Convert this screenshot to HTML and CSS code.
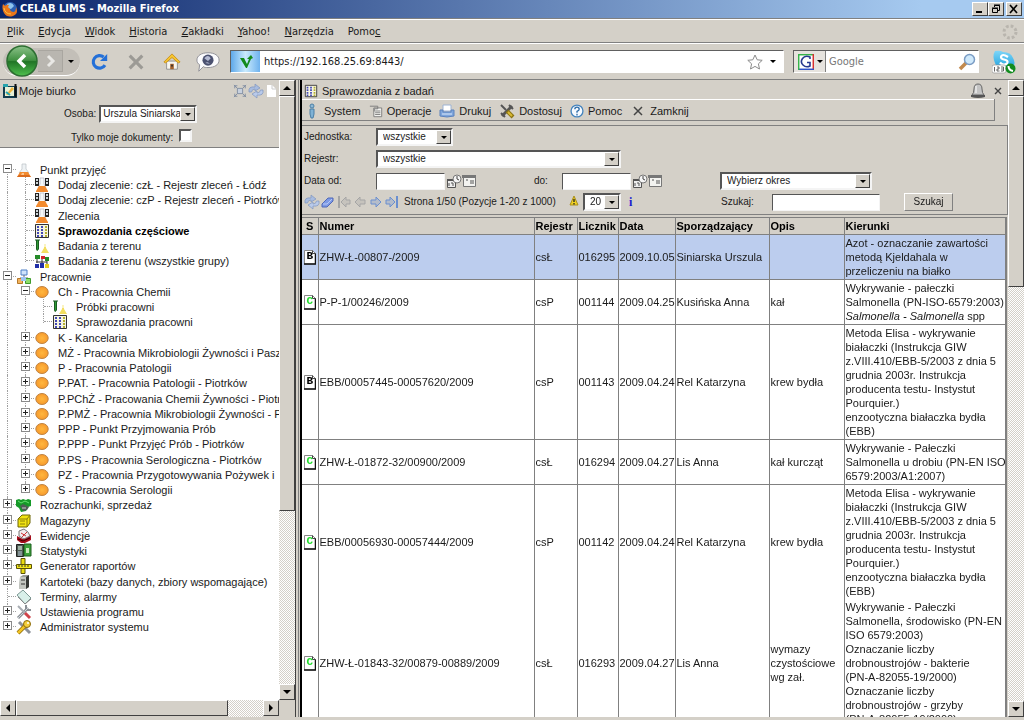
FILE: index.html
```html
<!DOCTYPE html>
<html lang="pl">
<head>
<meta charset="utf-8">
<title>CELAB LIMS</title>
<link rel="stylesheet" href="styles.css">
</head>
<body>
<svg class="defs" aria-hidden="true">
<defs>
<linearGradient id="gGreen" x1="0" y1="0" x2="0" y2="1"><stop offset="0" stop-color="#8cc28a"/><stop offset=".48" stop-color="#3f9040"/><stop offset=".52" stop-color="#217526"/><stop offset="1" stop-color="#4fc04e"/></linearGradient>
<radialGradient id="gDot"><stop offset="0" stop-color="#ffb73f"/><stop offset="1" stop-color="#f79a2c"/></radialGradient>
<linearGradient id="gSky" x1="0" y1="0" x2="0" y2="1"><stop offset="0" stop-color="#7fd6f8"/><stop offset="1" stop-color="#1b9fdd"/></linearGradient>
</defs>
<symbol id="flask" viewBox="0 0 16 16"><path d="M6 2h4v5l3 4H3l3-4z" fill="#eef2f4" stroke="#b9c0c4" stroke-width=".7"/><path d="M4 10h8l3 5H1z" fill="#f28a2e"/><path d="M3 13h10l2 2H1z" fill="#d96a1c"/><path d="M6 11h2v2H5z" fill="#fbc48d"/></symbol>
<symbol id="flasks" viewBox="0 0 16 16"><path d="M1 1h4v8H1zM11 1h4v8h-4z" fill="#222"/><path d="M2 2h2v2H2zM2 5h2v2H2zM12 2h2v2h-2zM12 5h2v2h-2z" fill="#cfd6da"/><path d="M6 1h4v6l2 4H4l2-4z" fill="#f4f7f8" stroke="#aab" stroke-width=".6"/><path d="M5 9h6l3 5v1H2v-1z" fill="#f28a2e"/></symbol>
<symbol id="sheet" viewBox="0 0 16 16"><path d="M1.500 1.500h13v13h-13z" fill="#f6f5e2" stroke="#333"/><path d="M4 3v11M8 3v11" stroke="#4248b4" stroke-width="2" stroke-dasharray="2 1"/><path d="M12 3v11" stroke="#b5ae31" stroke-width="2" stroke-dasharray="2 1"/></symbol>
<symbol id="tube" viewBox="0 0 16 16"><path d="M1 2h5M2.500 2v9q.500 3 2 0V2" fill="#2f9b35" stroke="#185c20"/><path d="M10 6h2v4l3 5H7l3-5z" fill="#f3df62"/><path d="M10 6h2v3h-2z" fill="#fbf3c0"/></symbol>
<symbol id="groups" viewBox="0 0 16 16"><path d="M1 2h5v4H1z" fill="#248b28"/><path d="M7 3h4v3H7z" fill="#d3242b"/><path d="M11 4h4v4h-4z" fill="#248b28"/><path d="M3 6v4M8 6v4M13 8v3M2 9h11" stroke="#333"/><path d="M1 11h4v4H1z" fill="#2130a8"/><path d="M6 10h4v5H6z" fill="#2130a8"/><path d="M11 11h4v4h-4z" fill="#e4cd20"/></symbol>
<symbol id="labs" viewBox="0 0 16 16"><path d="M5 1h6v5H5z" fill="#cfe3fb" stroke="#4c7fc7"/><path d="M8 6v4M4 9h8" stroke="#667"/><path d="M1.500 9.500h5v5h-5z" fill="#f2b35d" stroke="#b5782a"/><path d="M9.500 9.500h5v5h-5z" fill="#8edd6b" stroke="#3f9b2c"/><path d="M5 8h5v4H5z" fill="#9cc4f2"/></symbol>
<symbol id="dot" viewBox="0 0 16 16"><ellipse cx="8" cy="8" rx="6.200" ry="5.500" fill="url(#gDot)" stroke="#bf8444"/></symbol>
<symbol id="money" viewBox="0 0 16 16"><path d="M0 3l3-1 2 1 2-1 3 1 2-1 3 1v6l-3 1-2 4-5 1-2-4-3-2z" fill="#159a28"/><path d="M4 9l3-2 4 2 2 1-2 3-4 1z" fill="#4e5d56"/><path d="M2 4l3 2 4-2 4 2" stroke="#67e070" fill="none"/><path d="M6 11h4" stroke="#ccc"/></symbol>
<symbol id="box" viewBox="0 0 16 16"><path d="M2 6l4-4h8v8l-3 4H2z" fill="#f1e313" stroke="#6c6404"/><path d="M2 6h9l3-4M11 6v8M4 8h5M4 11h5" stroke="#8c820b" fill="none"/></symbol>
<symbol id="book" viewBox="0 0 16 16"><path d="M1 8l6 3 8-4v5l-6 3H5l-4-3z" fill="#a90f1e"/><path d="M3 3l5-2 4 3 2 4-6 3-5-3z" fill="#f1eded" stroke="#777"/><path d="M5 5l5 3M6 9l5-5" stroke="#c33"/><path d="M2 11l5 2 7-3" stroke="#400" fill="none"/></symbol>
<symbol id="stats" viewBox="0 0 16 16"><path d="M.500 1.500h7v12h-7z" fill="#4e5a52" stroke="#222"/><path d="M8 1h7v12H8z" fill="#3ca13a" stroke="#1d5f1e"/><path d="M2 3h4v4H2z" fill="#9fb3a5"/><path d="M10 5h3v5h-3z" fill="#c8eab8"/><path d="M3 8v5M5 8v5" stroke="#bcd"/></symbol>
<symbol id="rulers" viewBox="0 0 16 16"><path d="M5 .500h4v15H5z" fill="#eadb12" stroke="#5c5406"/><path d="M.500 6.500h15v4H.500z" fill="#f5e81c" stroke="#5c5406"/><path d="M3 7v2M6 7v2M9 7v2M12 7v2" stroke="#333"/></symbol>
<symbol id="cabinet" viewBox="0 0 16 16"><path d="M4 3l3-2h6v12l-3 2H3z" fill="#9a9d98"/><path d="M4 3h6v12H3z" fill="#c3c6c0"/><path d="M10 3l3-2v12l-3 2z" fill="#343734"/><path d="M5 6h4M5 10h4" stroke="#333"/></symbol>
<symbol id="card" viewBox="0 0 16 16"><path d="M1 6l6-5 8 8-6 6z" fill="#d8efe9" stroke="#7d9994"/><path d="M2 8l7 7 6-5" stroke="#888" fill="none"/></symbol>
<symbol id="tools" viewBox="0 0 16 16"><path d="M2 14L12 4" stroke="#8b9096" stroke-width="3"/><path d="M2 14L12 4" stroke="#d5d9de"/><path d="M2 2l9 9" stroke="#a8adb3" stroke-width="2"/><path d="M10 5V1M15 6h-4" stroke="#8b9096" stroke-width="2"/><path d="M9 9l5 5" stroke="#d0434a" stroke-width="3"/></symbol>
<symbol id="key" viewBox="0 0 16 16"><path d="M3 3l11 11" stroke="#8d9299" stroke-width="3"/><path d="M2 14l8-8" stroke="#8b6a0c" stroke-width="4"/><path d="M2 14l8-8" stroke="#f3c424" stroke-width="2.500"/><circle cx="11" cy="5" r="3.500" fill="#f5cf3a" stroke="#8b6a0c"/><circle cx="12" cy="4" r="1" fill="#fff"/></symbol>
<symbol id="doc" viewBox="0 0 12 15"><path d="M.500.500h8l3 3V14H.500z" fill="#fff" stroke="#888"/><path d="M0 14h11.500V3.500" fill="none" stroke="#111" stroke-width="1.500"/><path d="M8.500.500v3h3" fill="none" stroke="#444"/></symbol>
<symbol id="cal" viewBox="0 0 32 16"><path d="M1.500 7.500h8v7h-8z" fill="#eee" stroke="#555"/><path d="M1 6h9v2H1z" fill="#555"/><path d="M3 10v3M5 10h2v3" stroke="#555" fill="none"/><circle cx="11" cy="6" r="4" fill="#f4f4f4" stroke="#777"/><path d="M11 3v3l2 1" stroke="#444" fill="none"/><path d="M17.500 3.500h12v10h-12z" fill="#f3f3f0" stroke="#777"/><path d="M16 2h14v3H16z" fill="#777"/><path d="M20 7h2M24 8h4M24 10h4" stroke="#555"/></symbol>
<symbol id="refresh" viewBox="0 0 16 16"><path d="M1 9q-1-6 6-5V1l5 4-5 3V6Q4 6 3.500 9z" fill="#a8bce0" stroke="#7f95bd" stroke-width=".7"/><path d="M15 7q1 6-6 5v3L4 11l5-3v2q3 0 3.500-3z" fill="#b9caea" stroke="#7f95bd" stroke-width=".7"/></symbol>
<symbol id="arr" viewBox="0 0 16 16"><path d="M3 6h5V3l5 5-5 5v-3H3z" fill="currentColor" fill-opacity=".3" stroke="currentColor"/></symbol>
<symbol id="arrEnd" viewBox="0 0 16 16"><path d="M2 6h4V3l5 5-5 5v-3H2z" fill="currentColor" fill-opacity=".3" stroke="currentColor"/><path d="M13 2v12" stroke="currentColor" stroke-width="2"/></symbol>
</svg>

<header class="titlebar">
<svg class="i16" viewBox="0 0 16 16"><circle cx="8" cy="8" r="7" fill="#2c60b5"/><path d="M5 3q5-3 7 2l-3 3-4-1z" fill="#8fc4ee"/><path d="M1 3l2 2q2-2 4-1L6 6l2 2q0 3 4 3 2-1 2-5 3 7-3 9-6 2-9-3Q-.500 8 1 3z" fill="#e9761c"/><path d="M2 7q1 6 7 6" stroke="#f9c440" fill="none"/></svg>
<h1>CELAB LIMS - Mozilla Firefox</h1>
<div class="winbtns">
<button class="wb" aria-label="Minimalizuj"><svg viewBox="0 0 12 10"><path d="M2 8h6" stroke="#000" stroke-width="2"/></svg></button><button class="wb" aria-label="Przywróć"><svg viewBox="0 0 12 10"><path d="M4.500 3V1.500h5v5H8M4 1h6" fill="none" stroke="#000"/><path d="M2.500 4.500h5v4h-5zM2 4h6" fill="none" stroke="#000"/></svg></button><button class="wb close" aria-label="Zamknij"><svg viewBox="0 0 12 10"><path d="M2 1l7 8M9 1L2 9" stroke="#000" stroke-width="1.700"/></svg></button>
</div>
</header>
<nav class="menubar">
<button><u>P</u>lik</button><button><u>E</u>dycja</button><button><u>W</u>idok</button><button><u>H</u>istoria</button><button><u>Z</u>akładki</button><button><u>Y</u>ahoo!</button><button><u>N</u>arzędzia</button><button>Pomo<u>c</u></button>
<svg class="i16 throb" viewBox="0 0 16 16"><circle cx="8" cy="8" r="6" fill="none" stroke="#b9b5ae" stroke-width="3" stroke-dasharray="2.700 2"/></svg>
</nav>
<div class="navbar">
<div class="history">
<button class="back" aria-label="Wstecz"><svg viewBox="0 0 32 32"><circle cx="16" cy="16" r="15" fill="url(#gGreen)" stroke="#2c6e31" stroke-width="1.500"/><path d="M19 10l-6 6 6 6" fill="none" stroke="#fff" stroke-width="3.500"/></svg></button>
<button class="fwd" aria-label="Dalej"><svg viewBox="0 0 24 20"><path d="M10 5l5 5-5 5" fill="none" stroke="#e9e8e5" stroke-width="3"/></svg></button>
<button class="drop" aria-label="Historia"><i class="tri"></i></button>
</div>
<button class="nb" aria-label="Odśwież"><svg viewBox="0 0 20 20"><path d="M15.500 13.500A7 7 0 1 1 14 4.500" fill="none" stroke="#2470d8" stroke-width="3.500"/><path d="M18 1v8h-8z" fill="#2470d8"/></svg></button>
<button class="nb" aria-label="Zatrzymaj"><svg viewBox="0 0 20 20"><path d="M3 3l14 14M17 3L3 17" stroke="#9c9a95" stroke-width="3.500"/></svg></button>
<button class="nb" aria-label="Strona startowa"><svg viewBox="0 0 20 20"><path d="M4 9h12v9H4z" fill="#f8f6ee" stroke="#8d8d8d"/><path d="M10 1L1 10l2 1 7-6 7 6 2-1z" fill="#f7c62f" stroke="#c8901a"/><path d="M8 12h4v6H8z" fill="#a4622c"/><path d="M9 13h2v2H9z" fill="#333"/></svg></button>
<button class="nb wide" aria-label="Rozmowa"><svg viewBox="0 0 26 22"><path d="M13 1c7 0 12 3 12 8s-5 8-12 8c-2 0-4 0-5-1l-5 5 1-7c-2-1-3-3-3-5 0-5 5-8 12-8z" fill="#fbfbfd" stroke="#8c8c94"/><circle cx="13" cy="9" r="6" fill="#4b5170"/><path d="M9 7q4-5 7 0l-3 3zM10 12q3-2 5 1" fill="#b5bbd3"/></svg></button>
<div class="urlbar">
<span class="site"><svg viewBox="0 0 16 16"><path d="M2 4h4l3 6 2-5H9l4-4 2 3-2 1-4 9H8z" fill="#138a1b"/></svg></span>
<input aria-label="Adres" value="https://192.168.25.69:8443/">
<svg class="i16" viewBox="0 0 16 16"><path d="M8 1l2.200 4.800 5 .500-3.800 3.500 1.100 5.200L8 12.400 3.500 15l1.100-5.200L.800 6.300l5-.500z" fill="#fff" stroke="#8c8c8c"/></svg>
<button class="drop wide" aria-label="Lista adresów"><i class="tri"></i></button>
</div>
<div class="searchbar">
<button class="engine" aria-label="Wyszukiwarka"><svg class="i16" viewBox="0 0 16 16"><path d="M.500.500h15v15H.500z" fill="#fff"/><path d="M0 .700h16" stroke="#36b34a" stroke-width="1.500"/><path d="M15.300 0v16" stroke="#d8302f" stroke-width="1.500"/><path d="M16 15.300H0" stroke="#2e52c9" stroke-width="1.500"/><path d="M.700 0v16" stroke="#36b34a" stroke-width="1.500"/><path d="M12 5V3q-5-2-7.500 1.500T5 11q3 3 7 1V8.500H9" fill="none" stroke="#27398f" stroke-width="1.600"/></svg><i class="tri"></i></button>
<input aria-label="Szukaj w sieci" placeholder="Google">
<button class="drop go" aria-label="Szukaj w Google"><svg viewBox="0 0 18 18"><path d="M2 16l6-6" stroke="#c28a4e" stroke-width="3.500"/><circle cx="11.500" cy="6.500" r="5" fill="#cfe9fb" stroke="#7a9cc4" stroke-width="1.500"/></svg></button>
</div>
<button class="skype" aria-label="Skype"><svg viewBox="0 0 24 24"><path d="M3 1q5-1 8 1 8 0 10 6 3 5 0 9-4 4-9 2-7 1-9-6-3-7 0-12z" fill="url(#gSky)"/><path d="M16 7q-6-4-7 0 0 2 3 2.500 5 1 3 4-4 3-7-1" stroke="#fff" stroke-width="2.200" fill="none"/><rect x="0" y="15" width="14" height="8" rx="2" fill="#fff" stroke="#999" stroke-width=".7"/><path d="M2.500 17v4.500M5 17h2v2H5v2h2.500M9 17h2.500v4H9M9 19h2.500" stroke="#555" stroke-width=".9" fill="none"/><circle cx="18.500" cy="18.500" r="5" fill="#128c1f"/><path d="M16.500 16q0 4 4.500 5" stroke="#fff" stroke-width="2" fill="none"/></svg></button>
</div>

<main class="frames">
<aside class="left">
<div class="leftmain">
<div class="leftpage">
<div class="desk">
<div class="deskhead">
<svg class="i16" viewBox="0 0 16 16"><path d="M1 3h14v12H1z" fill="#123c4f"/><path d="M3 4h9v9H3z" fill="#e9f0d6"/><path d="M4 12L10 4l2 2-6 6z" fill="#f0b63a"/><path d="M1 1h5v3H1z" fill="#27a3ac"/><path d="M4 9l4 3" stroke="#27a3ac" stroke-width="2"/><path d="M13.500 1v13" stroke="#111" stroke-width="2"/></svg>
<h2>Moje biurko</h2>
<svg class="i14" viewBox="0 0 16 16"><path d="M5 5h6v6H5z" fill="#c7d0de" stroke="#7d8aa0"/><path d="M1 1l4 4M15 1l-4 4M1 15l4-4M15 15l-4-4M2 5V2h3M11 2h3v3M2 11v3h3M14 11v3h-3" stroke="#7d8aa0" fill="none"/></svg>
<svg class="i16"><use href="#refresh"/></svg>
<svg class="i12" viewBox="0 0 12 14"><path d="M2 1h5l4 4v8H2z" fill="#fff"/><path d="M7 1v4h4" fill="none" stroke="#ccc"/></svg>
</div>
<div class="person"><label for="osoba">Osoba:</label><span class="combo c98"><select id="osoba"><option>Urszula Siniarska</option></select><i class="arrow"></i></span></div>
<div class="mine"><label for="moje">Tylko moje dokumenty:</label><input id="moje" type="checkbox"></div>
</div>
<div class="tree">
<div class="row"><i class="g x first"><button class="minus" aria-label="Zwiń"></button></i><svg><use href="#flask"/></svg><a href="#">Punkt przyjęć</a></div>
<div class="row"><i class="g v"></i><i class="g v h"></i><svg><use href="#flasks"/></svg><a href="#">Dodaj zlecenie: czŁ - Rejestr zleceń - Łódź</a></div>
<div class="row"><i class="g v"></i><i class="g v h"></i><svg><use href="#flasks"/></svg><a href="#">Dodaj zlecenie: czP - Rejestr zleceń - Piotrków</a></div>
<div class="row"><i class="g v"></i><i class="g v h"></i><svg><use href="#flasks"/></svg><a href="#">Zlecenia</a></div>
<div class="row"><i class="g v"></i><i class="g v h"></i><svg><use href="#sheet"/></svg><a href="#" class="current">Sprawozdania częściowe</a></div>
<div class="row"><i class="g v"></i><i class="g v h"></i><svg><use href="#tube"/></svg><a href="#">Badania z terenu</a></div>
<div class="row"><i class="g v"></i><i class="g v h last"></i><svg><use href="#groups"/></svg><a href="#">Badania z terenu (wszystkie grupy)</a></div>
<div class="row"><i class="g x"><button class="minus" aria-label="Zwiń"></button></i><svg><use href="#labs"/></svg><a href="#">Pracownie</a></div>
<div class="row"><i class="g v"></i><i class="g x first"><button class="minus" aria-label="Zwiń"></button></i><svg><use href="#dot"/></svg><a href="#">Ch - Pracownia Chemii</a></div>
<div class="row"><i class="g v"></i><i class="g v"></i><i class="g v h"></i><svg><use href="#tube"/></svg><a href="#">Próbki pracowni</a></div>
<div class="row"><i class="g v"></i><i class="g v"></i><i class="g v h last"></i><svg><use href="#sheet"/></svg><a href="#">Sprawozdania pracowni</a></div>
<div class="row"><i class="g v"></i><i class="g x"><button class="plus" aria-label="Rozwiń"></button></i><svg><use href="#dot"/></svg><a href="#">K - Kancelaria</a></div>
<div class="row"><i class="g v"></i><i class="g x"><button class="plus" aria-label="Rozwiń"></button></i><svg><use href="#dot"/></svg><a href="#">MŻ - Pracownia Mikrobiologii Żywności i Pasz</a></div>
<div class="row"><i class="g v"></i><i class="g x"><button class="plus" aria-label="Rozwiń"></button></i><svg><use href="#dot"/></svg><a href="#">P - Pracownia Patologii</a></div>
<div class="row"><i class="g v"></i><i class="g x"><button class="plus" aria-label="Rozwiń"></button></i><svg><use href="#dot"/></svg><a href="#">P.PAT. - Pracownia Patologii - Piotrków</a></div>
<div class="row"><i class="g v"></i><i class="g x"><button class="plus" aria-label="Rozwiń"></button></i><svg><use href="#dot"/></svg><a href="#">P.PChŻ - Pracowania Chemii Żywności - Piotr</a></div>
<div class="row"><i class="g v"></i><i class="g x"><button class="plus" aria-label="Rozwiń"></button></i><svg><use href="#dot"/></svg><a href="#">P.PMŻ - Pracownia Mikrobiologii Żywności - P</a></div>
<div class="row"><i class="g v"></i><i class="g x"><button class="plus" aria-label="Rozwiń"></button></i><svg><use href="#dot"/></svg><a href="#">PPP - Punkt Przyjmowania Prób</a></div>
<div class="row"><i class="g v"></i><i class="g x"><button class="plus" aria-label="Rozwiń"></button></i><svg><use href="#dot"/></svg><a href="#">P.PPP - Punkt Przyjęć Prób - Piotrków</a></div>
<div class="row"><i class="g v"></i><i class="g x"><button class="plus" aria-label="Rozwiń"></button></i><svg><use href="#dot"/></svg><a href="#">P.PS - Pracownia Serologiczna - Piotrków</a></div>
<div class="row"><i class="g v"></i><i class="g x"><button class="plus" aria-label="Rozwiń"></button></i><svg><use href="#dot"/></svg><a href="#">PZ - Pracownia Przygotowywania Pożywek i</a></div>
<div class="row"><i class="g v"></i><i class="g x last"><button class="plus" aria-label="Rozwiń"></button></i><svg><use href="#dot"/></svg><a href="#">S - Pracownia Serologii</a></div>
<div class="row"><i class="g x"><button class="plus" aria-label="Rozwiń"></button></i><svg><use href="#money"/></svg><a href="#">Rozrachunki, sprzedaż</a></div>
<div class="row"><i class="g x"><button class="plus" aria-label="Rozwiń"></button></i><svg><use href="#box"/></svg><a href="#">Magazyny</a></div>
<div class="row"><i class="g x"><button class="plus" aria-label="Rozwiń"></button></i><svg><use href="#book"/></svg><a href="#">Ewidencje</a></div>
<div class="row"><i class="g x"><button class="plus" aria-label="Rozwiń"></button></i><svg><use href="#stats"/></svg><a href="#">Statystyki</a></div>
<div class="row"><i class="g x"><button class="plus" aria-label="Rozwiń"></button></i><svg><use href="#rulers"/></svg><a href="#">Generator raportów</a></div>
<div class="row"><i class="g x"><button class="plus" aria-label="Rozwiń"></button></i><svg><use href="#cabinet"/></svg><a href="#">Kartoteki (bazy danych, zbiory wspomagające)</a></div>
<div class="row"><i class="g v h"></i><svg><use href="#card"/></svg><a href="#">Terminy, alarmy</a></div>
<div class="row"><i class="g x"><button class="plus" aria-label="Rozwiń"></button></i><svg><use href="#tools"/></svg><a href="#">Ustawienia programu</a></div>
<div class="row"><i class="g x last"><button class="plus" aria-label="Rozwiń"></button></i><svg><use href="#key"/></svg><a href="#">Administrator systemu</a></div>
</div>
</div>
<div class="vscroll"><button class="sb up" aria-label="W górę"></button><div class="thumb t67"></div><div class="track"></div><button class="sb down" aria-label="W dół"></button></div>
</div>
<div class="hscroll"><button class="sb lt" aria-label="W lewo"></button><div class="thumb t84"></div><div class="track"></div><button class="sb rt" aria-label="W prawo"></button><span class="corner"></span></div>
</aside>
<div class="splitter"></div>
<section class="right">
<div class="rightpage">
<div class="dochead">
<svg class="i14"><use href="#sheet"/></svg><h2>Sprawozdania z badań</h2>
<svg class="i16" viewBox="0 0 16 16"><path d="M8 1q4 0 4 5 0 4 2 6H2q2-2 2-6 0-5 4-5z" fill="#c4c4c4" stroke="#666"/><path d="M1 12h14v2q-7 2-14 0z" fill="#555"/><path d="M6 3v7" stroke="#fff"/></svg>
<button class="shut" aria-label="Zamknij okno"><svg viewBox="0 0 8 8"><path d="M1 1l6 6M7 1L1 7" stroke="#444" stroke-width="1.400"/></svg></button>
</div>
<div class="toolbar">
<button><svg class="i16" viewBox="0 0 16 16"><circle cx="8" cy="3" r="2" fill="#8fb9d6" stroke="#4a7fa6"/><path d="M6 6h4v5l-1 4H7l-1-4z" fill="#7fb2d5" stroke="#4a7fa6"/></svg>System</button>
<button><svg class="i14" viewBox="0 0 16 16"><path d="M5.500 4.500h9v10h-9z" fill="#f2f2ef" stroke="#777"/><path d="M1 2.500h9v3H6v3M7 8h6M7 10h6M7 12h6" stroke="#777" fill="none"/></svg>Operacje</button>
<button><svg class="i16" viewBox="0 0 16 16"><path d="M4 2h8v6H4z" fill="#fff" stroke="#9db3d3"/><path d="M1 7h3v2h8V7h3v6q-7 2-14 0z" fill="#7fa6dc" stroke="#5c83bd"/><path d="M3 11h10" stroke="#dce9fa"/></svg>Drukuj</button>
<button><svg class="i16" viewBox="0 0 16 16"><path d="M3 13L13 3" stroke="#555" stroke-width="3"/><path d="M2 2l5 5" stroke="#555" stroke-width="2"/><path d="M8 8l6 6" stroke="#8c7413" stroke-width="4"/><path d="M9 9l4 4" stroke="#d9ba34" stroke-width="2"/><path d="M2 10l4 4M10 2l4 4" stroke="#555" stroke-width="2"/></svg>Dostosuj</button>
<button><svg class="i14" viewBox="0 0 16 16"><circle cx="8" cy="8" r="6.800" fill="#f6faff" stroke="#4584bd" stroke-width="1.500"/><path d="M5.500 6q0-2.500 2.500-2.500T10.500 6Q10.500 7.500 8 8.500V10M8 11v2" fill="none" stroke="#2d6ca8" stroke-width="1.500"/></svg>Pomoc</button>
<button><svg class="i16" viewBox="0 0 16 16"><path d="M4 4l8 8M12 4l-8 8" stroke="#444" stroke-width="1.500"/></svg>Zamknij</button>
</div>
<form class="filter">
<div class="line"><label for="jedn" class="lab">Jednostka:</label><span class="combo c76"><select id="jedn"><option>wszystkie</option></select><i class="arrow"></i></span></div>
<div class="line"><label for="rej" class="lab">Rejestr:</label><span class="combo c245"><select id="rej"><option>wszystkie</option></select><i class="arrow"></i></span></div>
<div class="line"><label for="od" class="lab">Data od:</label><input id="od" class="date"><svg class="cal"><use href="#cal"/></svg><label for="do" class="lab2">do:</label><input id="do" class="date"><svg class="cal"><use href="#cal"/></svg><span class="combo c151"><select aria-label="Okres"><option>Wybierz okres</option></select><i class="arrow"></i></span></div>
<div class="line pager"><div class="pages">
<svg class="i16"><use href="#refresh"/></svg><svg class="i16" viewBox="0 0 16 16"><path d="M2 10l6-6h5v3l-6 6H2z" fill="#7d9ae6" stroke="#5068b8"/><path d="M3 10h4l5-5" stroke="#b9c8f5" fill="none"/></svg><svg class="i16 gray flip"><use href="#arrEnd"/></svg><svg class="i16 gray flip"><use href="#arr"/></svg><svg class="i16 blue"><use href="#arr"/></svg><svg class="i16 blue"><use href="#arrEnd"/></svg>
<label for="ile">Strona 1/50 (Pozycje 1-20 z 1000)</label></div>
<svg class="i12" viewBox="0 0 12 14"><path d="M6 1l4 9H2z" fill="#f3d321" stroke="#a98f1d"/><path d="M6 4v3M6 8v1.500" stroke="#222" stroke-width="1.300"/></svg>
<span class="combo c38"><select id="ile"><option>20</option></select><i class="arrow"></i></span><b class="info">i</b>
<div class="find"><label for="q">Szukaj:</label><input id="q" autofocus><button type="button">Szukaj</button></div></div>
</form>
<table>
<colgroup><col class="k1"><col><col class="k3"><col class="k4"><col class="k5"><col class="k6"><col class="k7"><col class="k8"></colgroup>
<thead><tr><th class="s">S</th><th>Numer</th><th>Rejestr</th><th>Licznik</th><th>Data</th><th>Sporządzający</th><th>Opis</th><th>Kierunki</th></tr></thead>
<tbody>
<tr class="sel"><td class="s"><span class="st b"><svg><use href="#doc"/></svg><b>B</b></span></td><td>ZHW-Ł-00807-/2009</td><td>csŁ</td><td>016295</td><td>2009.10.05</td><td>Siniarska Urszula</td><td></td><td>Azot - oznaczanie zawartości<br>metodą Kjeldahala w<br>przeliczeniu na białko</td></tr>
<tr><td class="s"><span class="st c"><svg><use href="#doc"/></svg><b>C</b></span></td><td>P-P-1/00246/2009</td><td>csP</td><td>001144</td><td>2009.04.25</td><td>Kusińska Anna</td><td>kał</td><td>Wykrywanie - pałeczki<br>Salmonella (PN-ISO-6579:2003)<br><em>Salmonella - Salmonella</em> spp</td></tr>
<tr><td class="s"><span class="st b"><svg><use href="#doc"/></svg><b>B</b></span></td><td>EBB/00057445-00057620/2009</td><td>csP</td><td>001143</td><td>2009.04.24</td><td>Rel Katarzyna</td><td>krew bydła</td><td>Metoda Elisa - wykrywanie<br>białaczki (Instrukcja GIW<br>z.VIII.410/EBB-5/2003 z dnia 5<br>grudnia 2003r. Instrukcja<br>producenta testu- Instystut<br>Pourquier.)<br>enzootyczna białaczka bydła<br>(EBB)</td></tr>
<tr><td class="s"><span class="st c"><svg><use href="#doc"/></svg><b>C</b></span></td><td>ZHW-Ł-01872-32/00900/2009</td><td>csŁ</td><td>016294</td><td>2009.04.27</td><td>Lis Anna</td><td>kał kurcząt</td><td>Wykrywanie - Pałeczki<br>Salmonella u drobiu (PN-EN ISO<br>6579:2003/A1:2007)</td></tr>
<tr class="open"><td class="s"><span class="st c"><svg><use href="#doc"/></svg><b>C</b></span></td><td>EBB/00056930-00057444/2009</td><td>csP</td><td>001142</td><td>2009.04.24</td><td>Rel Katarzyna</td><td>krew bydła</td><td>Metoda Elisa - wykrywanie<br>białaczki (Instrukcja GIW<br>z.VIII.410/EBB-5/2003 z dnia 5<br>grudnia 2003r. Instrukcja<br>producenta testu- Instystut<br>Pourquier.)<br>enzootyczna białaczka bydła<br>(EBB)</td></tr>
<tr><td class="s"><span class="st c"><svg><use href="#doc"/></svg><b>C</b></span></td><td>ZHW-Ł-01843-32/00879-00889/2009</td><td>csŁ</td><td>016293</td><td>2009.04.27</td><td>Lis Anna</td><td>wymazy<br>czystościowe<br>wg zał.</td><td>Wykrywanie - Pałeczki<br>Salmonella, środowisko (PN-EN<br>ISO 6579:2003)<br>Oznaczanie liczby<br>drobnoustrojów - bakterie<br>(PN-A-82055-19/2000)<br>Oznaczanie liczby<br>drobnoustrojów - grzyby<br>(PN-A-82055-19/2000)</td></tr>
</tbody>
</table>
</div>
<div class="vscroll"><button class="sb up" aria-label="W górę"></button><div class="thumb t31"></div><div class="track"></div><button class="sb down" aria-label="W dół"></button></div>
</section>
</main>
</body>
</html>
```
FILE: styles.css
```css
* { box-sizing: border-box; }
body {
  margin: 0;
  height: 100vh;
  display: flex;
  flex-direction: column;
  overflow: hidden;
  background: #d4d0c8;
  color: #1a1a1a;
  font: 11px/14px "Liberation Sans", Arial, sans-serif;
}
h1, h2 { margin: 0; font-size: 11px; font-weight: normal; }
button, input, select { font: inherit; color: inherit; margin: 0; padding: 0; border-radius: 0; outline: 0; }
button { background: none; border: 0; }
svg { display: block; flex: none; }
.defs { position: absolute; width: 0; height: 0; }
.i16 { width: 16px; height: 16px; }
.i14 { width: 14px; height: 14px; }
.i12 { width: 12px; height: 14px; }

/* browser chrome */
.titlebar, .menubar, .urlbar, .searchbar { font-family: "DejaVu Sans Condensed", "DejaVu Sans", sans-serif; }
.titlebar {
  flex: none;
  height: 18px;
  display: flex;
  align-items: center;
  gap: 2px;
  padding: 0 2px;
  background: linear-gradient(90deg, #0a246a, #a6caf0 90%);
}
.titlebar h1 { flex: 1; color: #fff; font-weight: bold; }
.winbtns { display: flex; }
.wb {
  width: 16px;
  height: 14px;
  padding: 1px;
  background: #d4d0c8;
  border: 1px solid;
  border-color: #fff #404040 #404040 #fff;
}
.wb svg { width: 12px; height: 10px; }
.wb.close { margin-left: 2px; }
.menubar {
  flex: none;
  height: 24px;
  display: flex;
  align-items: center;
  gap: 14px;
  padding: 2px 6px 0 7px;
  margin-top: 1px;
  border-top: 1px solid #fff;
  border-bottom: 1px solid #808080;
  box-shadow: 0 -1px #808080, 0 1px #fff;
}
.throb { margin-left: auto; }
.navbar {
  flex: none;
  height: 37px;
  display: flex;
  align-items: center;
  padding: 1px 8px 0 3px;
  border-bottom: 1px solid #808080;
}
.history {
  display: flex;
  align-items: center;
  width: 77px;
  height: 28px;
  margin-right: 11px;
  border-radius: 14px;
  background: #c3bfb8;
  border-bottom: 1px solid #fff;
}
.back { margin-left: 3px; }
.back svg { width: 32px; height: 32px; }
.fwd { background: #b9b6b0; border: 1px solid #a9a6a0; border-left: 0; }
.fwd svg { width: 24px; height: 20px; }
.drop { width: 16px; display: grid; place-items: center; }
.drop.wide { width: 20px; }
.tri { width: 0; height: 0; border: 3px solid transparent; border-top-color: #000; border-bottom: 0; }
.nb { margin-right: 18px; }
.nb svg { width: 18px; height: 20px; }
.nb.wide { margin: 0 10px 0 -3px; }
.nb.wide svg { width: 24px; height: 22px; }
.urlbar, .searchbar {
  display: flex;
  align-items: center;
  height: 23px;
  background: #fff;
  border: 1px solid;
  border-color: #606060 #fff #fff #606060;
}
.urlbar { flex: 3; margin-right: 9px; }
.urlbar input, .searchbar input { flex: 1; min-width: 0; border: 0; padding: 0 4px; background: none; }
.searchbar input { padding: 0 3px; }
.searchbar input::placeholder { color: #777; opacity: 1; }
.site { width: 29px; height: 21px; display: grid; place-items: center; background: linear-gradient(90deg, #5fa9ea, #c9eafd 50%, #6eb2ee); }
.site svg { width: 16px; height: 16px; }
.searchbar { flex: 1; }
.engine { display: flex; align-items: center; gap: 3px; width: 32px; height: 21px; padding-left: 4px; background: #e6e3de; border-right: 1px solid #808080; }
.go { width: 22px; }
.go svg { width: 18px; height: 18px; }
.skype { margin-left: 13px; }
.skype svg { width: 24px; height: 24px; }

/* frames */
.frames { flex: 1; min-height: 0; display: flex; margin-bottom: 3px; }
.left { width: 295px; flex: none; display: flex; flex-direction: column; }
.leftmain { flex: 1; min-height: 0; display: flex; }
.leftpage { flex: 1; min-width: 0; overflow: hidden; background: #fff; }
.splitter { flex: none; width: 7px; border: solid; border-width: 0 2px 0 1px; border-color: #404040 #000 #404040 #404040; background: linear-gradient(90deg, #d4d0c8 2px, #808080 2px 3px, #d4d0c8 3px); }
.desk { background: #d4d0c8; border-bottom: 1px solid #808080; padding: 3px 2px 0; font-size: 10px; }
.deskhead { display: flex; align-items: center; gap: 1px; }
.deskhead h2 { flex: 1; }
.person { display: flex; align-items: center; gap: 3px; margin: 6px 0 6px 62px; }
.mine { display: flex; align-items: center; gap: 6px; margin-left: 69px; }
.mine input { appearance: none; width: 13px; height: 13px; background: #fff; border: 2px solid; border-color: #555 #f4f4f4 #f4f4f4 #555; margin-bottom: 5px; }
.tree { padding: 14px 0 0; margin-left: -2px; }
.row { display: flex; align-items: center; height: 15px; white-space: nowrap; }
.row:nth-child(4n+3) { height: 16px; }
.row svg { width: 16px; height: 16px; margin-right: 8px; }
.row a { color: #1a1a1a; text-decoration: none; }
.row a.current { font-weight: bold; color: #000; }
.g { position: relative; align-self: stretch; width: 18px; flex: none; }
.g::before { content: ""; position: absolute; left: 9px; top: 0; bottom: 0; border-left: 1px dotted #a0a0a0; }
.g.first::before { top: 7px; }
.g.last::before { bottom: 7px; }
.h::after, .x::after { content: ""; position: absolute; left: 10px; right: 0; top: 7px; border-top: 1px dotted #a0a0a0; }
.minus, .plus { position: absolute; z-index: 1; left: 5px; top: 2px; width: 9px; height: 9px; border: 1px solid #8a8a8a; background: linear-gradient(#222, #222) center / 5px 1px no-repeat #fff; }
.plus { background: linear-gradient(#222, #222) center / 5px 1px no-repeat, linear-gradient(#222, #222) center / 1px 5px no-repeat #fff; }

/* scrollbars */
.vscroll { flex: none; width: 16px; display: flex; flex-direction: column; }
.hscroll { flex: none; height: 17px; display: flex; }
.sb, .thumb { flex: none; background: #d4d0c8; border: 1px solid; border-color: #fff #404040 #404040 #fff; }
.sb { width: 16px; height: 16px; display: grid; place-items: center; }
.sb::before { content: ""; border: 4px solid transparent; }
.up::before { border-bottom-color: #000; border-top: 0; }
.down::before { border-top-color: #000; border-bottom: 0; }
.lt::before { border-right-color: #000; border-left: 0; }
.rt::before { border-left-color: #000; border-right: 0; }
.track { flex: 1; background: repeating-conic-gradient(#fff 0 25%, #d4d0c8 0 50%) 0 0 / 2px 2px; }
.t67 { height: 67%; }
.t31 { height: 30%; }
.t84 { width: 72%; }
.hscroll .thumb, .hscroll .sb { height: 16px; }
.corner { width: 16px; }

/* document frame */
.right { flex: 1; min-width: 0; display: flex; }
.rightpage { flex: 1; min-width: 0; overflow: hidden; }
.dochead { display: flex; align-items: center; height: 19px; padding: 2px 6px 0 2px; gap: 4px; }
.dochead h2 { flex: 1; }
.shut { margin-left: 4px; }
.shut svg { width: 8px; height: 8px; }
.toolbar { display: flex; align-items: center; gap: 8px; height: 22px; margin-right: 13px; padding: 2px 0 0 2px; border: 1px solid #808080; border-width: 0 1px 1px 0; box-shadow: inset 0 1px #fff; }
.toolbar button { display: flex; align-items: center; gap: 4px; }
.filter { margin: 4px 0 2px; padding: 0 0 2px 2px; border: 1px solid #808080; border-left: 0; font-size: 10px; }
.line { display: flex; align-items: center; height: 22px; }
.lab { width: 72px; }
.combo { position: relative; display: inline-block; height: 18px; }
.combo select {
  appearance: none;
  display: block;
  width: 100%;
  height: 18px;
  padding: 0 0 0 5px;
  background: #fff;
  border: 2px solid;
  border-color: #555 #f4f4f4 #f4f4f4 #555;
}
.combo .arrow { position: absolute; right: 2px; top: 2px; width: 15px; height: 14px; display: grid; place-items: center; pointer-events: none; background: #d4d0c8; border: 1px solid; border-color: #fff #404040 #404040 #fff; }
.arrow::before { content: ""; border: 3px solid transparent; border-top-color: #000; border-bottom: 0; }
.c98 { width: 98px; }
.c98 select { padding-left: 2px; }
.c76 { width: 77px; }
.c245 { width: 245px; }
.c151 { width: 152px; }
.c38 { width: 38px; }
.date, .find input { height: 17px; background: #fff; border: 1px solid; border-color: #555 #f4f4f4 #f4f4f4 #555; padding: 0 3px; }
.date { width: 69px; }
.cal { width: 32px; height: 16px; margin: 0 56px 0 1px; }
.lab2 { width: 28px; }
.pager { height: 20px; }
.pages { display: flex; align-items: center; width: 264px; white-space: nowrap; }
.pages label { margin-left: 4px; }
.blue { color: #6a8fd0; }
.gray { color: #a5a5a5; }
.flip { transform: scaleX(-1); }
.pager > .combo { margin-left: 3px; }
.info { width: 92px; margin-left: 8px; color: #1c1cd0; font: bold 12px/14px "Liberation Serif", serif; }
.find { display: flex; align-items: center; }
.find label { width: 51px; }
.find input { width: 108px; }
.find button { width: 49px; height: 18px; margin-left: 24px; border: 1px solid; border-color: #fff #808080 #808080 #fff; }

table { width: calc(100% - 1px); table-layout: fixed; border-collapse: collapse; border-top: 1px solid #808080; border-right: 2px solid #808080; background: #fff; }
th { background: #d4d0c8; text-align: left; height: 17px; white-space: nowrap; color: #000; }
th, td { padding: 1px 0 1px 1px; border: 1px solid #808080; border-top: 0; border-left: 0; }
td { white-space: nowrap; }
.s { padding: 0; text-align: center; }
.sel td { background: #bccdee; }
.open td { border-bottom: 0; }
.k1 { width: 16px; }
.k3 { width: 43px; }
.k4 { width: 41px; }
.k5 { width: 57px; }
.k6 { width: 94px; }
.k7 { width: 75px; }
.k8 { width: 162px; }
.st { display: inline-grid; justify-items: center; vertical-align: middle; }
.st > * { grid-area: 1 / 1; }
.st svg { width: 12px; height: 15px; }
.st b { font: bold 11px/12px "Liberation Mono", monospace; color: #000; }
.st.c b { color: #1fdc2b; }
```
